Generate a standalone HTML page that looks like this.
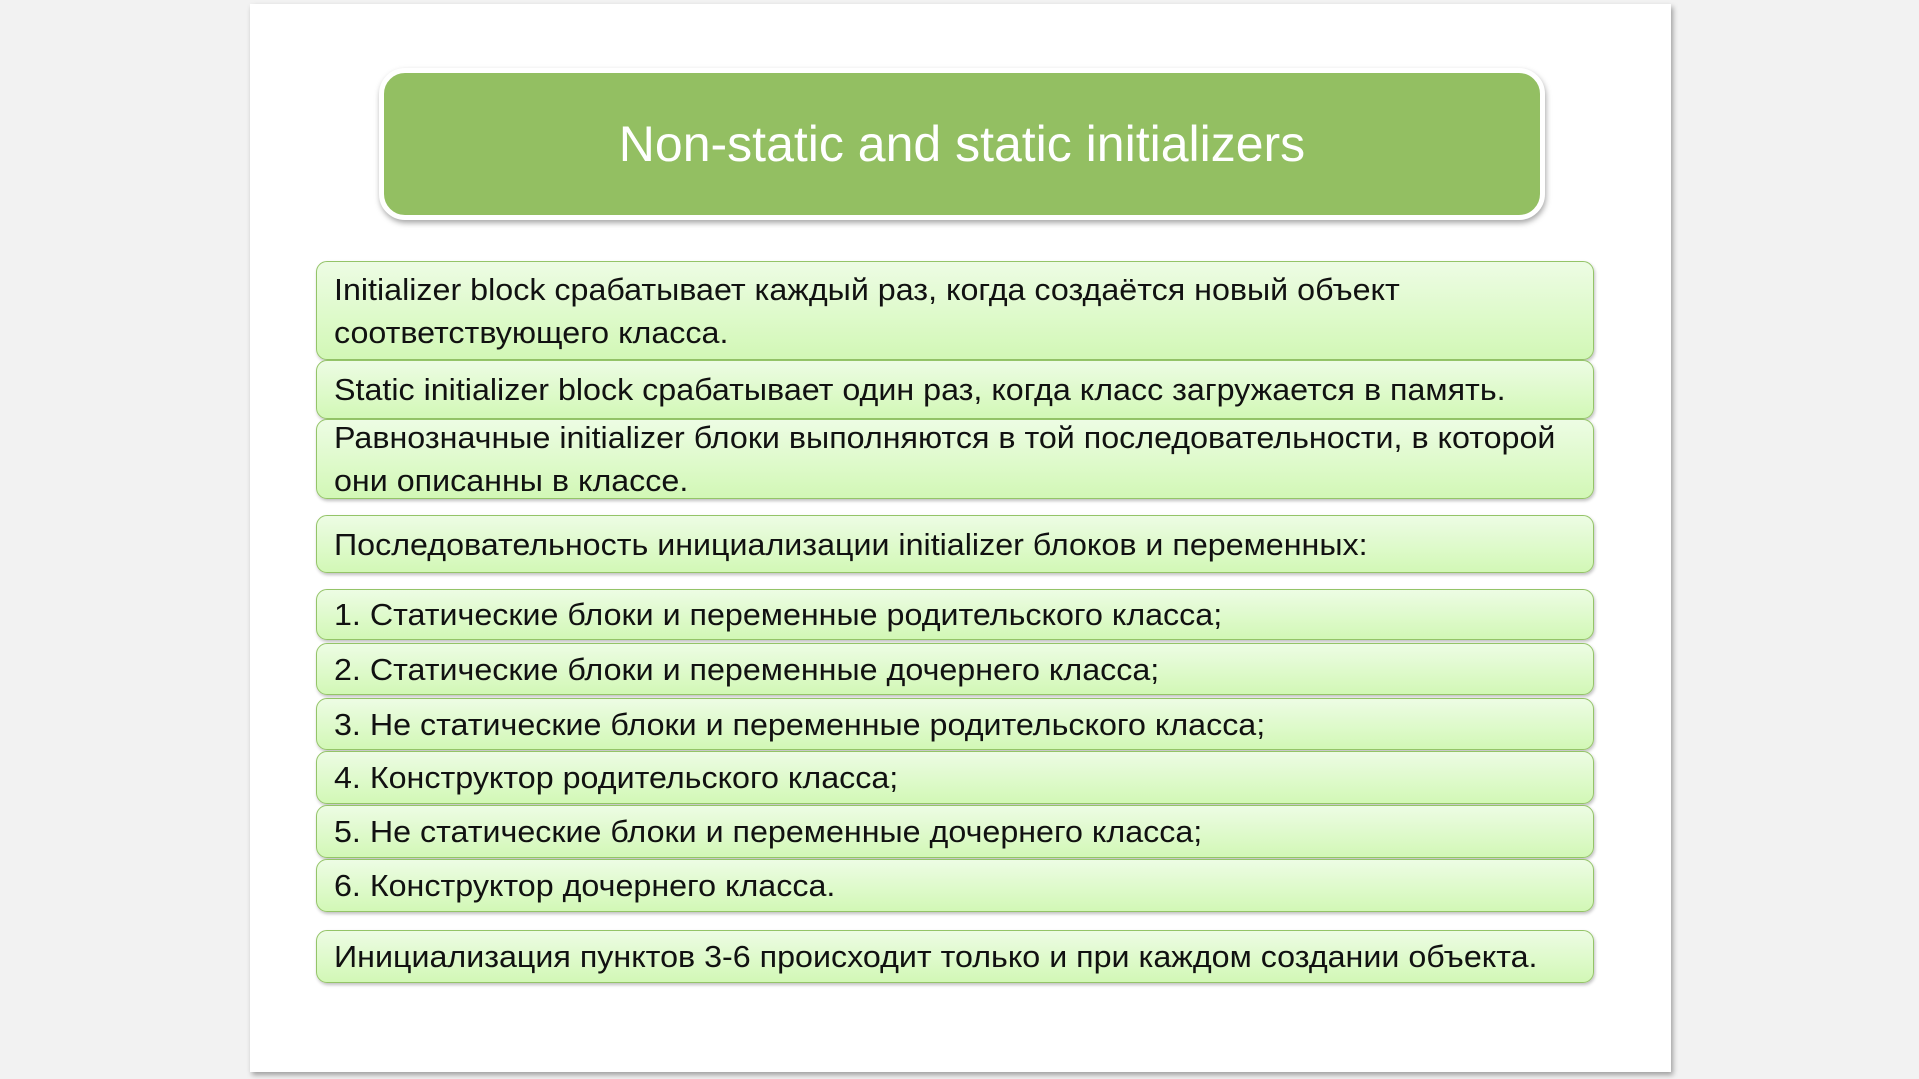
<!DOCTYPE html>
<html><head><meta charset="utf-8"><style>
html,body{margin:0;padding:0;width:1919px;height:1079px;overflow:hidden;background:#f2f2f2;font-family:"Liberation Sans",sans-serif}
.slide{position:absolute;left:250px;top:4px;width:1421px;height:1068px;background:#fff;box-shadow:2px 3px 5px rgba(0,0,0,.35)}
.title{position:absolute;left:379px;top:68px;width:1156px;height:142px;background:#93bf62;border:5px solid #fff;border-radius:26px;box-shadow:1px 3px 6px rgba(0,0,0,.35);display:flex;align-items:center;justify-content:center}
.title span{color:#fff;font-size:50px;display:inline-block;white-space:nowrap}
.b{position:absolute;left:316px;width:1278px;border:1.5px solid #94c468;border-radius:11px;background:linear-gradient(#edfce4,#d2f8b6);box-shadow:1px 2px 3px rgba(0,0,0,.25);box-sizing:border-box;padding-left:17px;display:flex;align-items:center;color:#111;font-size:31px;line-height:43px;white-space:nowrap;overflow:visible}
.b span{display:inline-block;transform-origin:left center;transform:scaleX(1.04)}
</style></head><body>
<div class="slide"></div>
<div class="title"><span>Non-static and static initializers</span></div>
<div class="b" style="top:261px;height:99px"><span>Initializer block срабатывает каждый раз, когда создаётся новый объект<br>соответствующего класса.</span></div>
<div class="b" style="top:360px;height:59px"><span>Static initializer block срабатывает один раз, когда класс загружается в память.</span></div>
<div class="b" style="top:419px;height:80px"><span>Равнозначные initializer блоки выполняются в той последовательности, в которой<br>они описанны в классе.</span></div>
<div class="b" style="top:515px;height:58px"><span>Последовательность инициализации initializer блоков и переменных:</span></div>
<div class="b" style="top:589px;height:51px"><span>1. Статические блоки и переменные родительского класса;</span></div>
<div class="b" style="top:643px;height:52px"><span>2. Статические блоки и переменные дочернего класса;</span></div>
<div class="b" style="top:698px;height:52px"><span>3. Не статические блоки и переменные родительского класса;</span></div>
<div class="b" style="top:751px;height:53px"><span>4. Конструктор родительского класса;</span></div>
<div class="b" style="top:805px;height:53px"><span>5. Не статические блоки и переменные дочернего класса;</span></div>
<div class="b" style="top:859px;height:53px"><span>6. Конструктор дочернего класса.</span></div>
<div class="b" style="top:930px;height:53px"><span>Инициализация пунктов 3-6 происходит только и при каждом создании объекта.</span></div>
</body></html>
